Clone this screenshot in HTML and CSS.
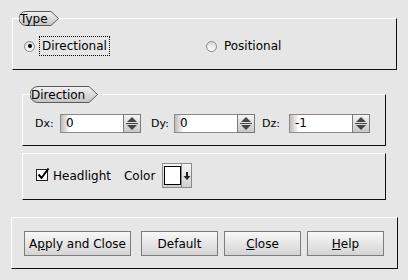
FILE: index.html
```html
<!DOCTYPE html>
<html lang="en">

<head>
    <meta charset="UTF-8">
    <title>Light</title>
    <link rel="stylesheet" href="styles.css">
</head>

<body>
    <div class="dialog">

        <div class="group group-type">
            <div class="tab tab-type">
                <svg class="tab-shape" width="40" height="15" viewBox="0 0 40 15">
                    <defs>
                        <linearGradient id="tabfill" x1="0" y1="0" x2="0" y2="1">
                            <stop offset="0" stop-color="#f2f2f2"/>
                            <stop offset="1" stop-color="#c4c4c4"/>
                        </linearGradient>
                    </defs>
                    <path d="M7 0.5 H32 L39.5 7.5 L32 14.5 H7 A7 7 0 0 1 7 0.5 Z" fill="url(#tabfill)" stroke="#5a5a5a"/>
                </svg>
                <span class="tab-text">Type</span>
            </div>
            <div class="radio-row">
                <label class="radio">
                    <span class="radio-dot checked"></span>
                    <span class="radio-text focus">Directional</span>
                </label>
                <label class="radio radio-positional">
                    <span class="radio-dot"></span>
                    <span class="radio-text">Positional</span>
                </label>
            </div>
        </div>

        <div class="inner">
            <div class="group group-direction">
                <div class="tab tab-direction">
                    <svg class="tab-shape" width="68" height="17" viewBox="0 0 68 17">
                        <defs>
                            <linearGradient id="tabfill2" x1="0" y1="0" x2="0" y2="1">
                                <stop offset="0" stop-color="#f2f2f2"/>
                                <stop offset="1" stop-color="#c4c4c4"/>
                            </linearGradient>
                        </defs>
                        <path d="M8 0.5 H59 L67.5 8.5 L59 16.5 H8 A8 8 0 0 1 8 0.5 Z" fill="url(#tabfill2)" stroke="#5a5a5a"/>
                    </svg>
                    <span class="tab-text">Direction</span>
                </div>
                <div class="spin-row">
                    <div class="spin-item">
                        <span class="spin-label">Dx:</span>
                        <div class="spin">
                            <div class="spin-field">0</div>
                            <div class="spin-btn">
                                <svg width="16" height="17" viewBox="0 0 16 17">
                                    <path d="M8 2 L13 7 H3 Z" fill="#444"/>
                                    <line x1="2" y1="8.5" x2="14" y2="8.5" stroke="#444"/>
                                    <path d="M3 10 H13 L8 15 Z" fill="#444"/>
                                </svg>
                            </div>
                        </div>
                    </div>
                    <div class="spin-item spin-dy">
                        <span class="spin-label">Dy:</span>
                        <div class="spin">
                            <div class="spin-field">0</div>
                            <div class="spin-btn">
                                <svg width="16" height="17" viewBox="0 0 16 17">
                                    <path d="M8 2 L13 7 H3 Z" fill="#444"/>
                                    <line x1="2" y1="8.5" x2="14" y2="8.5" stroke="#444"/>
                                    <path d="M3 10 H13 L8 15 Z" fill="#444"/>
                                </svg>
                            </div>
                        </div>
                    </div>
                    <div class="spin-item spin-dz">
                        <span class="spin-label">Dz:</span>
                        <div class="spin">
                            <div class="spin-field">-1</div>
                            <div class="spin-btn">
                                <svg width="16" height="17" viewBox="0 0 16 17">
                                    <path d="M8 2 L13 7 H3 Z" fill="#444"/>
                                    <line x1="2" y1="8.5" x2="14" y2="8.5" stroke="#444"/>
                                    <path d="M3 10 H13 L8 15 Z" fill="#444"/>
                                </svg>
                            </div>
                        </div>
                    </div>
                </div>
            </div>

            <div class="group group-light">
                <div class="light-row">
                    <label class="check">
                        <svg class="check-box" width="15" height="15" viewBox="0 0 15 15">
                            <rect x="0.5" y="2.5" width="11" height="11" fill="#fff" stroke="#222"/>
                            <path d="M2.5 7.5 L5.5 11 L12.5 1.5" fill="none" stroke="#000" stroke-width="2"/>
                        </svg>
                        <span>Headlight</span>
                    </label>
                    <span class="color-label">Color</span>
                    <div class="color-btn">
                        <div class="color-swatch"></div>
                        <div class="color-arrow">
                            <svg width="8" height="10" viewBox="0 0 8 10">
                                <rect x="3" y="1" width="2" height="4" fill="#222"/>
                                <path d="M0.5 5 H7.5 L4 9 Z" fill="#222"/>
                            </svg>
                        </div>
                    </div>
                </div>
            </div>
        </div>

        <div class="group group-buttons">
            <button class="btn btn-apply">A<u>p</u>ply and Close</button>
            <button class="btn btn-default">Default</button>
            <button class="btn btn-close"><u>C</u>lose</button>
            <button class="btn btn-help"><u>H</u>elp</button>
        </div>

    </div>
</body>

</html>
```

FILE: styles.css
```css
body {
    margin: 0;
    background-color: #e6e6e6;
    font-family: "DejaVu Sans", sans-serif;
    font-size: 12px;
    color: #000;
}

.dialog {
    width: 408px;
    height: 280px;
    padding-top: 18px;
    box-sizing: border-box;
    display: flex;
    flex-direction: column;
}

/* etched frames */
.group {
    position: relative;
    border-top: 1px solid #fff;
    border-left: 1px solid #fff;
    border-right: 1px solid #111;
    border-bottom: 1px solid #111;
}

.group-type {
    margin: 0 11px 0 12px;
    padding: 17px 0 13px 11px;
}

.inner {
    display: flex;
    flex-direction: column;
    margin: 24px 22px 0 22px;
}

.group-direction {
    padding: 19px 12px 12px 12px;
}

.group-light {
    margin-top: 7px;
    padding: 9px 12px 11px 13px;
}

.group-buttons {
    margin: 17px 10px 0 11px;
    padding: 13px 12px 12px 12px;
    display: flex;
}

/* group titles */
.tab {
    position: absolute;
    display: flex;
    align-items: center;
}

.tab-shape {
    position: absolute;
    left: 0;
    top: 0;
}

.tab-text {
    position: relative;
    line-height: 14px;
}

.tab-type {
    left: 6px;
    top: -8px;
    width: 40px;
    height: 15px;
}

.tab-type .tab-text {
    margin-left: 1px;
}

.tab-direction {
    left: 7px;
    top: -9px;
    width: 68px;
    height: 17px;
}

.tab-direction .tab-text {
    margin-left: 1px;
}

/* radio buttons */
.radio-row {
    display: flex;
    height: 20px;
}

.radio {
    display: flex;
    align-items: center;
}

.radio-positional {
    margin-left: 96px;
}

.radio-dot {
    width: 11px;
    height: 11px;
    box-sizing: border-box;
    border: 1px solid #888;
    border-radius: 50%;
    background: linear-gradient(#d8d8d8, #fff);
    display: flex;
    align-items: center;
    justify-content: center;
}

.radio-dot.checked::after {
    content: "";
    width: 4px;
    height: 4px;
    border-radius: 50%;
    background-color: #000;
}

.radio-text {
    margin-left: 4px;
    padding: 0 2px;
    height: 20px;
    line-height: 18px;
    box-sizing: border-box;
    border: 1px dotted transparent;
}

.radio-text.focus {
    border-color: #000;
}

/* spin boxes */
.spin-row {
    display: flex;
    height: 19px;
}

.spin-item {
    display: flex;
    align-items: center;
}

.spin-dy {
    margin-left: 10px;
}

.spin-dz {
    margin-left: 7px;
}

.spin-label {
    width: 25px;
    font-size: 11px;
}

.spin-dy .spin-label {
    width: 23px;
}

.spin-dz .spin-label {
    width: 27px;
}

.spin {
    display: flex;
    height: 19px;
}

.spin-field {
    width: 63px;
    box-sizing: border-box;
    border: 1px solid #8a8a8a;
    border-right: none;
    background: linear-gradient(to right, #bdbdbd, #fff 9px);
    padding-left: 5px;
    line-height: 17px;
}

.spin-btn {
    width: 18px;
    box-sizing: border-box;
    border: 1px solid #7a7a7a;
    background: linear-gradient(#f4f4f4, #c8c8c8);
    display: flex;
}

/* headlight */
.light-row {
    display: flex;
    align-items: center;
    height: 25px;
}

.check {
    display: flex;
    align-items: center;
}

.check-box {
    margin-top: -3px;
    margin-right: 2px;
}

.color-label {
    margin-left: 13px;
}

.color-btn {
    margin-left: 7px;
    height: 25px;
    width: 30px;
    box-sizing: border-box;
    border: 1px solid #8a8a8a;
    background: linear-gradient(#f6f6f6, #d0d0d0);
    display: flex;
}

.color-swatch {
    width: 17px;
    margin: 2px 0 2px 1px;
    box-sizing: border-box;
    border: 1px solid #000;
    background-color: #fff;
}

.color-arrow {
    flex: 1;
    border-left: 1px solid #8a8a8a;
    display: flex;
    align-items: center;
    justify-content: center;
}

/* dialog buttons */
.btn {
    height: 25px;
    box-sizing: border-box;
    border: 1px solid #7c7c7c;
    background: linear-gradient(#f8f8f8, #d4d4d4);
    font-family: "DejaVu Sans", sans-serif;
    font-size: 12px;
    color: #000;
    padding: 0;
}

.btn-apply {
    width: 107px;
}

.btn-default {
    width: 77px;
    margin-left: 10px;
}

.btn-close {
    width: 77px;
    margin-left: 6px;
}

.btn-help {
    width: 77px;
    margin-left: 6px;
}
```
